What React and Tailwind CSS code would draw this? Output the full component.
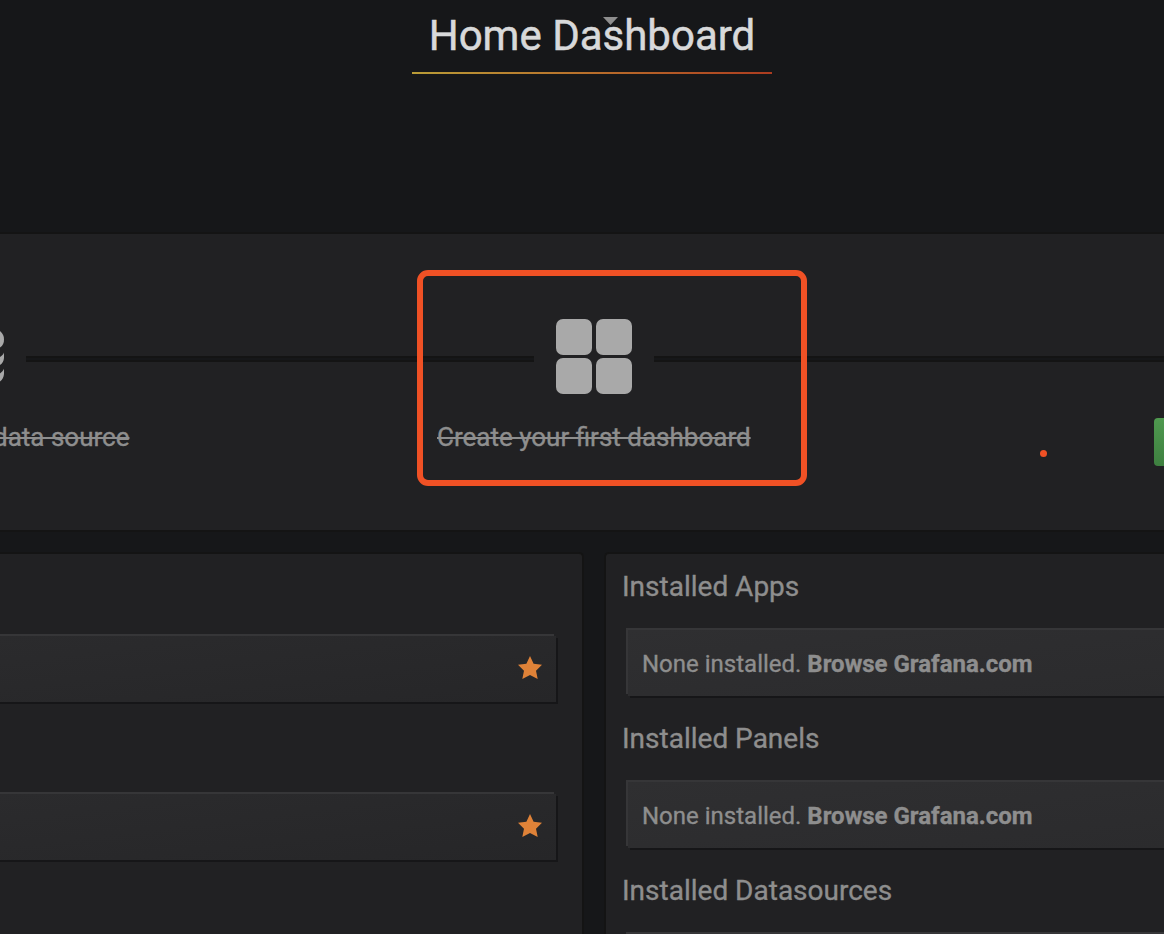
import React from "react";

const raised = "shadow-[-2px_-2px_0_0_#363638,2px_2px_0_0_#161618]";

function Line({ className }) {
  return <div className={"mt-[122px] h-[6px] border-y-2 border-[#141414] bg-[#161719] " + className} />;
}

function Star() {
  return (
    <svg width="24" height="23" viewBox="0 0 24 23" className="mb-[4px] block">
      <path d="M12 0 L15.6 7.7 L24 8.8 L18 14.7 L19.7 23 L12 19.1 L4.3 23 L6 14.7 L0 8.8 L8.4 7.7 Z" fill="#df8238" />
    </svg>
  );
}

function StarRow() {
  return (
    <div className={"-ml-[4px] flex h-[66px] w-[560px] items-center justify-end bg-gradient-to-br from-[#2b2b2d] to-[#262628] pr-[14px] " + raised}>
      <Star />
    </div>
  );
}

function Plugin({ title, children }) {
  return (
    <section className="h-[152px] shrink-0">
      <h2 className="h-[76px] pt-[13px] pl-[16px] text-[28px] leading-[40px] text-[#8e8e8e]">{title}</h2>
      <div className={"-mr-[4px] ml-[22px] flex h-[66px] items-center bg-gradient-to-br from-[#2f2f31] to-[#2b2b2d] pt-[2px] pl-[14px] text-[24px] text-[#8e8e8e] whitespace-pre " + raised}>
        {children}
      </div>
    </section>
  );
}

function NoneInstalled() {
  return (
    <>
      None installed. <b className="font-bold">Browse Grafana.com</b>
    </>
  );
}

export default function App() {
  return (
    <main className="relative flex h-[934px] w-[1164px] flex-col overflow-hidden bg-[#161719] font-['Roboto',sans-serif] [-webkit-text-stroke:0.35px_currentColor]">
      <header className="flex h-[232px] shrink-0 justify-center pl-[20px]">
        <div className="relative h-[74px] w-[360px]">
          <h1 className="flex h-[72px] items-center justify-center text-[42px] leading-[72px] text-[#d8d9da] [-webkit-text-stroke:0.5px_currentColor]">Home Dashboard</h1>
          <div className="h-[2px] bg-gradient-to-r from-[#b99c37] via-[#b86e2b] to-[#ac3c20]" />
          <svg className="absolute top-[17px] left-[191px]" width="15" height="8" viewBox="0 0 15 8">
            <path d="M0 0H15L7.5 8Z" fill="#8e8e8e" />
          </svg>
        </div>
      </header>

      <section className="flex h-[300px] shrink-0 border-y-2 border-[#141414] bg-[#212123]">
        <svg width="26" height="296" className="block shrink-0">
          <g fill="#a9a9a9">
            <path d="M0 97 C3 99.5 4 102 4 105.5 C4 109 3 111.5 0 113.5Z" />
            <path d="M0 123 C2 121.8 3.2 120.5 4 118.5 V124 C3.7 127 2.5 129.5 0 131Z" />
            <path d="M0 139.5 C2 138 3.2 136.8 4 134.8 V140 C3.7 143 2.5 145.5 0 147.5Z" />
          </g>
        </svg>
        <Line className="w-[508px]" />
        <div className="mt-[84.5px] ml-[22px] grid h-[75.5px] w-[76px] shrink-0 grid-cols-2 gap-x-[3.5px] gap-y-[2.5px]">
          <i className="rounded-[7px] bg-[#a9a9a9]" />
          <i className="rounded-[7px] bg-[#a9a9a9]" />
          <i className="rounded-[7px] bg-[#a9a9a9]" />
          <i className="rounded-[7px] bg-[#a9a9a9]" />
        </div>
        <Line className="ml-[22px] w-[510px]" />
      </section>

      <div className="absolute top-[417px] left-[-7px] text-[26px] leading-[40px] whitespace-nowrap text-[#8e8e8e] line-through">data source</div>
      <div className="absolute top-[417px] left-[437px] text-[26px] leading-[40px] whitespace-nowrap text-[#8e8e8e] line-through">Create your first dashboard</div>
      <div className="absolute top-[418px] left-[1154px] h-[48px] w-[30px] rounded-[4px] bg-gradient-to-b from-[#4f994f] to-[#3e8040]" />
      <div className="absolute top-[450px] left-[1040px] size-[7px] rounded-full bg-[#f05125]" />
      <div className="absolute top-[270px] left-[417px] h-[216px] w-[390px] rounded-[11px] border-[6px] border-[#f05125]" />

      <div className="flex h-[402px] shrink-0 gap-[20px] pt-[20px]">
        <section className="flex w-[584px] shrink-0 flex-col gap-[92px] rounded-tr-[5px] border-t-2 border-r-2 border-[#141414] bg-[#212123] pt-[82px]">
          <StarRow />
          <StarRow />
        </section>
        <section className="flex grow flex-col overflow-hidden rounded-tl-[5px] border-t-2 border-l-2 border-[#141414] bg-[#212123]">
          <Plugin title="Installed Apps">
            <NoneInstalled />
          </Plugin>
          <Plugin title="Installed Panels">
            <NoneInstalled />
          </Plugin>
          <Plugin title="Installed Datasources" />
        </section>
      </div>
    </main>
  );
}
